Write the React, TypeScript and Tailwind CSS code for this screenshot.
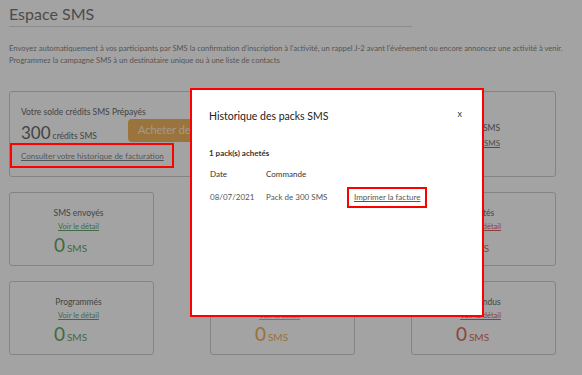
import React from "react";

const stats = [
  { title: "SMS envoyés", color: "text-[#66a866]", link: "text-[#6aa66a]" },
  { title: "En attente", color: "text-[#f2b05a]", link: "text-[#e8a85a]" },
  { title: "Rejetés", color: "text-[#e06a58]", link: "text-[#d9675c]" },
  { title: "Programmés", color: "text-[#66a866]", link: "text-[#6aa66a]" },
  { title: "En cours", color: "text-[#f2b05a]", link: "text-[#e8a85a]" },
  { title: "Suspendus", color: "text-[#e06a58]", link: "text-[#d9675c]" },
];

function StatCard({ title, color, link }: { title: string; color: string; link: string }) {
  return (
    <div className="h-[74px] rounded-[3px] border border-[#cfcfcf] flex flex-col items-center pt-[14px] pr-[6px]">
      <div className="text-[8.5px] leading-[12px] text-[#6a6a6a]">{title}</div>
      <a className={`mt-[3px] text-[7.5px] leading-[10px] underline ${link}`}>Voir le détail</a>
      <div className={`mt-[3px] flex items-baseline pr-[16px] ${color}`}>
        <span className="text-[19px] leading-[20px]">0</span>
        <span className="ml-[2px] text-[10px]">SMS</span>
      </div>
    </div>
  );
}

export default function App() {
  return (
    <div className="relative h-[375px] w-full overflow-hidden bg-white font-['Lato',sans-serif] text-[#777]">
      {/* Page */}
      <div className="px-[9px] pt-[4px]">
        <h1 className="w-[403px] border-b border-[#dcdcdc] pb-[3px] text-[16px] leading-[19px] text-[#777]">
          Espace SMS
        </h1>
        <p className="mt-[15px] text-[7.6px] leading-[12px] text-[#888]">
          Envoyez automatiquement à vos participants par SMS la confirmation d'inscription à l'activité, un rappel J-2 avant l'événement ou encore annoncez une activité à venir.
          <br />
          Programmez la campagne SMS à un destinataire unique ou à une liste de contacts
        </p>

        {/* Credits card */}
        <div className="mt-[25px] flex h-[86px] w-[547px] justify-between rounded-[3px] border border-[#cfcfcf] px-[11px] pt-[14px]">
          <div>
            <div className="text-[8.5px] leading-[12px] text-[#6a6a6a]">Votre solde crédits SMS Prépayés</div>
            <div className="flex items-start gap-[31px]">
              <div className="mt-[4px] flex items-baseline text-[#6a6a6a]">
                <span className="text-[17px] leading-[22px]">300</span>
                <span className="ml-[2px] text-[8.5px]">crédits SMS</span>
              </div>
              <button className="mt-[1px] h-[23px] rounded-[4px] bg-[#f2b55e] px-[10px] text-[11px] text-[#fff0da]">
                Acheter des crédits
              </button>
            </div>
            <div className="relative z-20 -ml-[11px] mt-[-1px] w-[164px] whitespace-nowrap border-2 border-[#ff0000] px-[9px] pt-[2px] pb-[4px] leading-[11px]">
              <a className="text-[8px] leading-[11px] text-[#555] underline">Consulter votre historique de facturation</a>
            </div>
          </div>
          <div className="mt-[16px] mr-[44px] flex flex-col items-end">
            <div className="text-[8.5px] leading-[12px] text-[#6a6a6a]">Recharge automatique des SMS</div>
            <a className="mt-[3px] text-[8px] underline text-[#7a7a7a]">Voir les tarifs des SMS</a>
          </div>
        </div>

        {/* Stats */}
        <div className="mt-[15px] grid w-[547px] grid-cols-3 gap-x-[56px] gap-y-[15px]">
          {stats.map((s) => (
            <StatCard key={s.title} {...s} />
          ))}
        </div>
      </div>

      {/* Backdrop */}
      <div className="absolute inset-0 z-10 bg-black/[0.36]" />

      {/* Modal */}
      <div className="absolute left-[190px] top-[88px] z-30 h-[229px] w-[294px] border-2 border-[#ff0000] bg-white px-[17px] pt-[18px] text-[#333]">
        <div className="flex items-start justify-between">
          <h2 className="text-[10.5px] leading-[16px] text-[#222]">Historique des packs SMS</h2>
          <span className="mr-[3px] mt-[1px] text-[9px] leading-[10px] text-[#333]">x</span>
        </div>
        <div className="mt-[24px] text-[8px] font-bold leading-[11px] text-[#333]">1 pack(s) achetés</div>
        <div className="mt-[10px] flex text-[8px] leading-[11px] text-[#333]">
          <span className="ml-[1px] w-[56px]">Date</span>
          <span>Commande</span>
        </div>
        <div className="mt-[7px] flex items-center text-[8px] leading-[11px] text-[#555]">
          <span className="ml-[1px] w-[56px]">08/07/2021</span>
          <span className="w-[81px]">Pack de 300 SMS</span>
          <span className="border-2 border-[#ff0000] px-[5px] py-[3px]">
            <a className="underline text-[#555]">Imprimer la facture</a>
          </span>
        </div>
      </div>
    </div>
  );
}
